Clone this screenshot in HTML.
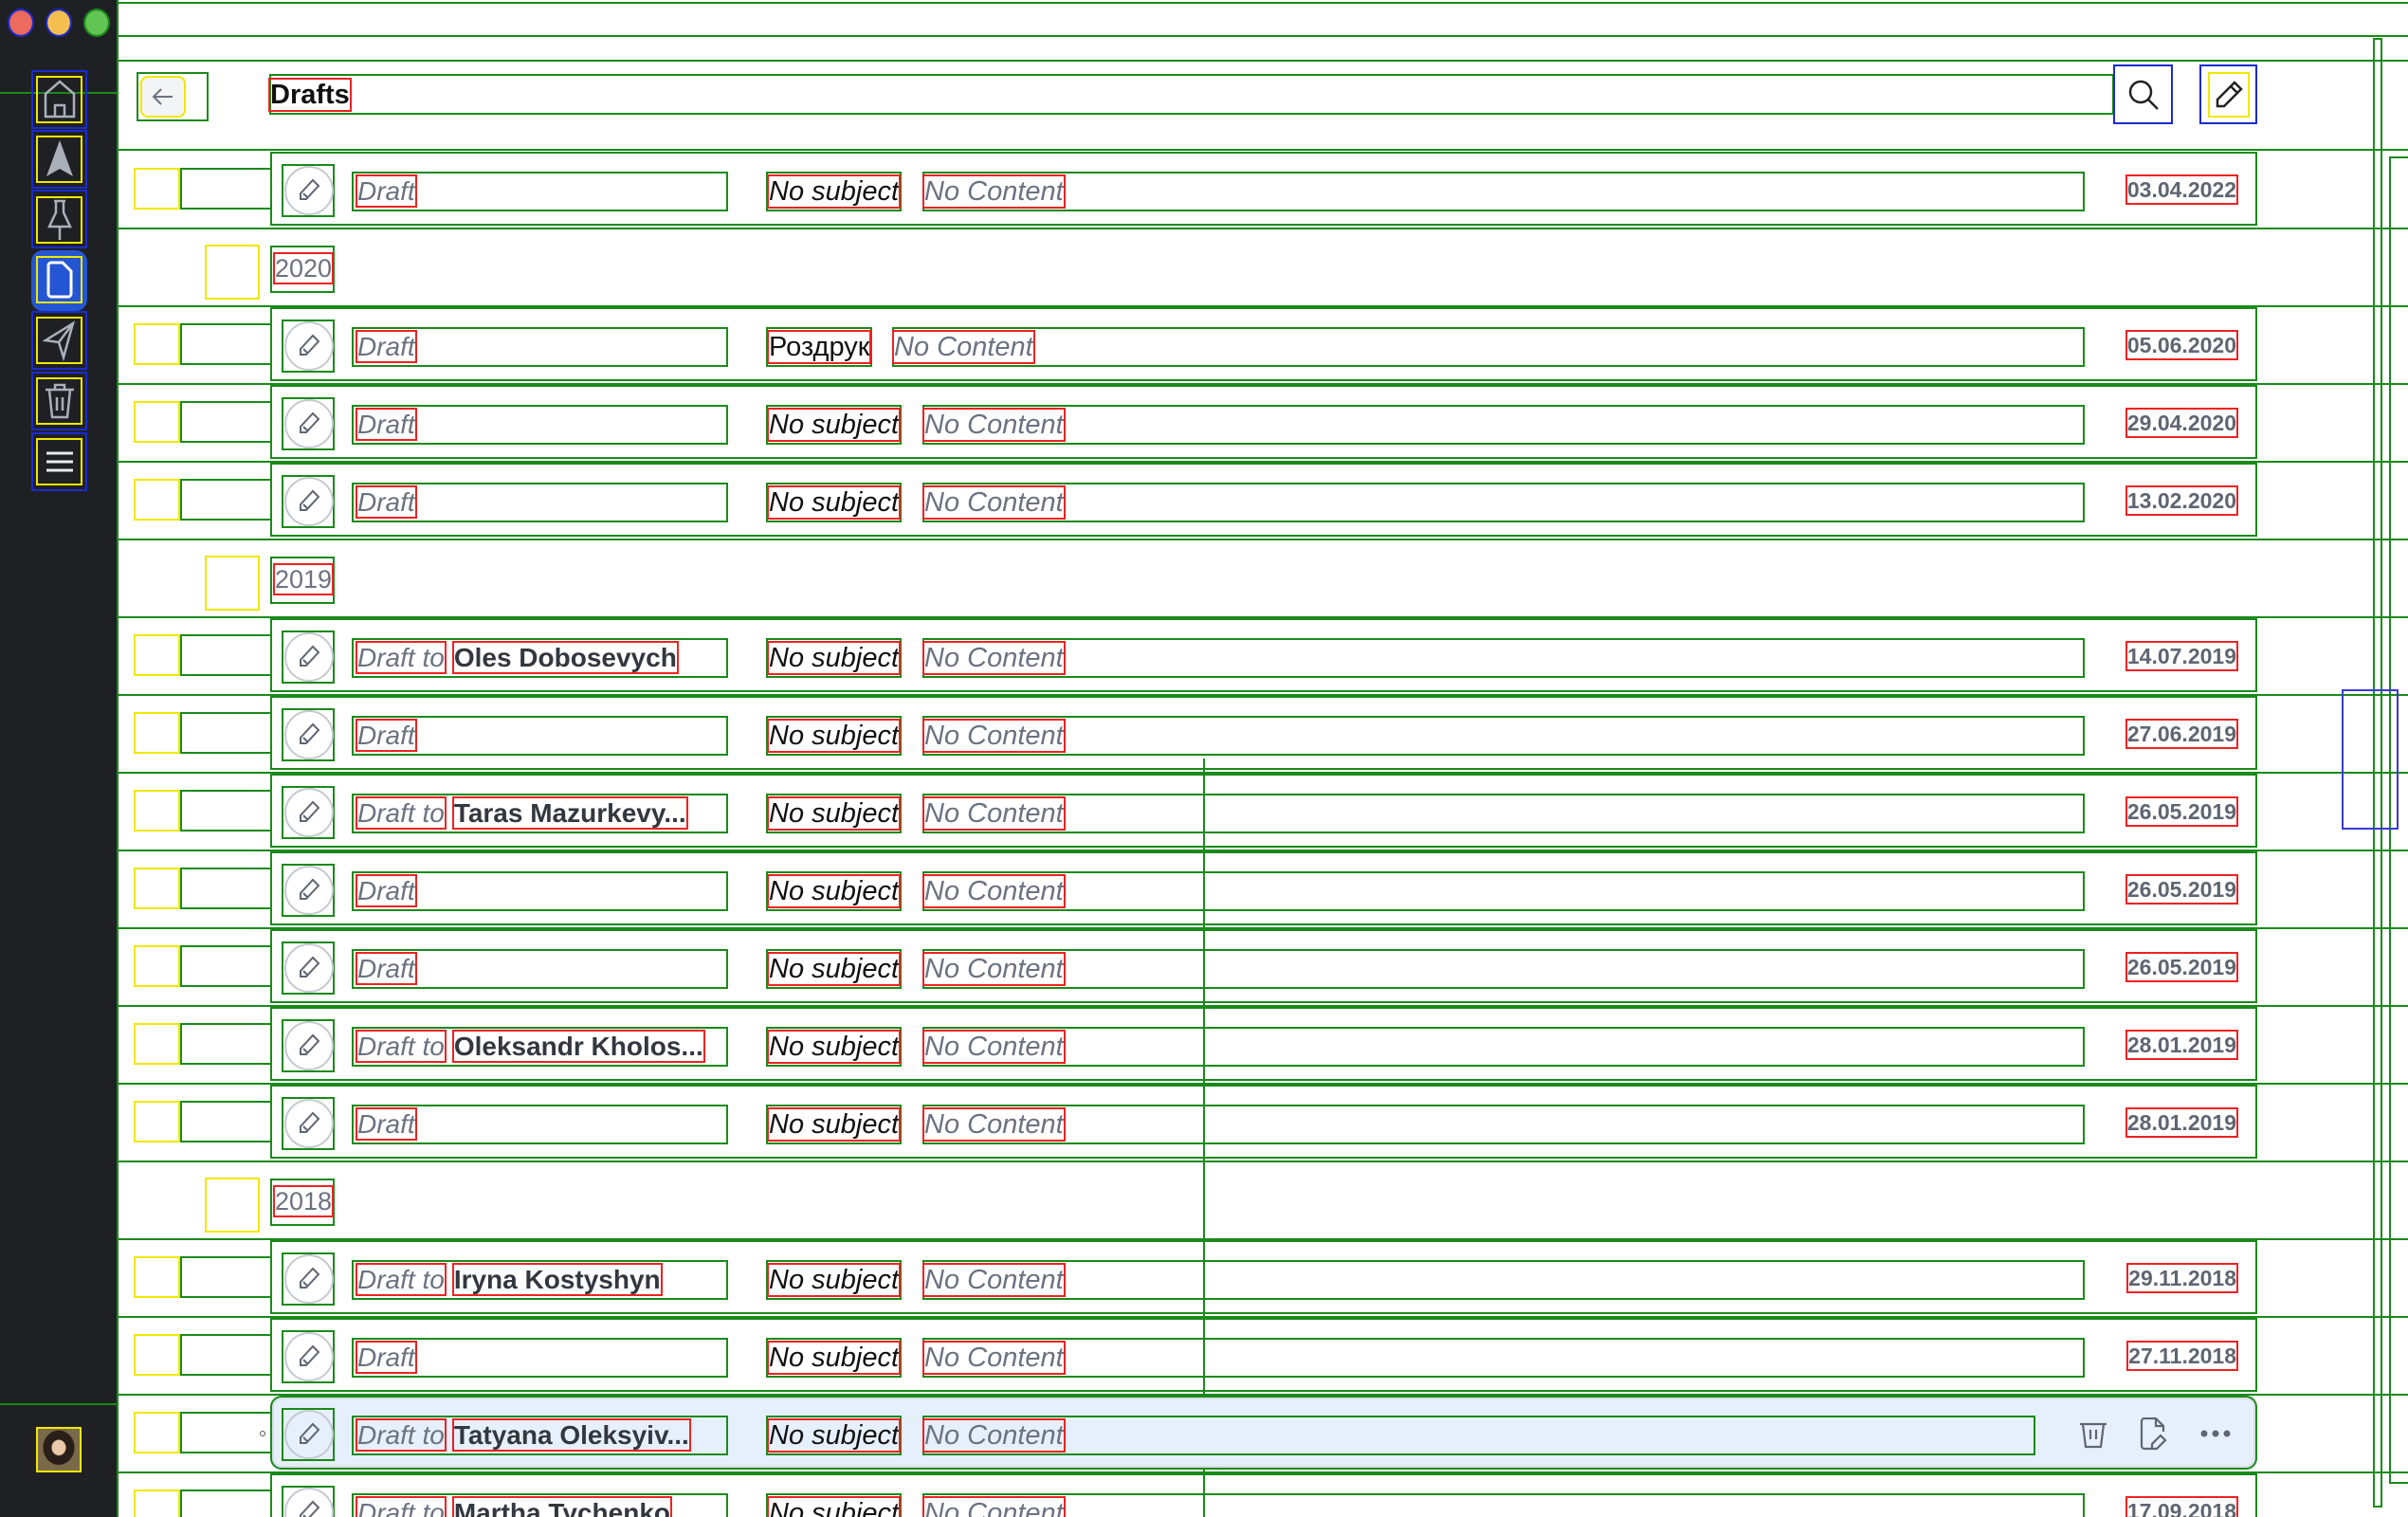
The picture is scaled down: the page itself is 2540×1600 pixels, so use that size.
<!DOCTYPE html>
<html><head><meta charset="utf-8"><style>
*{box-sizing:border-box;margin:0;padding:0}
html,body{width:2540px;height:1600px;overflow:hidden}
body{background:#fff;font-family:"Liberation Sans","Noto Sans CJK SC",sans-serif}
#wrap{position:relative;width:2540px;height:1600px;overflow:hidden}
.a{position:absolute}
.g{position:absolute;border:2px solid #1a8a1a}
.r{outline:2px solid #e22;outline-offset:0}
#side{left:0;top:0;width:125px;height:1600px;background:#1f2024;border-right:2px solid #1a8a1a}
.dot{position:absolute;top:11px;width:24px;height:26px;border-radius:50%}
.ni{position:absolute;left:38px;width:49px;height:50px;border:2px solid #f0e800;display:flex;align-items:center;justify-content:center}
.nb{position:absolute;left:33px;width:59px;height:62px;border:2px solid #1b2bd0}
.row{position:absolute;left:285px;width:2096px;height:78px;border:2px solid #1a8a1a}
.av{position:absolute;left:10px;top:11px;width:56px;height:56px;border:2px solid #1a8a1a}
.av div{position:absolute;left:1px;top:0px;width:52px;height:52px;border-radius:50%;border:2px solid #c5c9d0;display:flex;align-items:center;justify-content:center}
.nm{position:absolute;left:84px;top:19px;width:397px;height:42px;border:2px solid #1a8a1a;font-size:28px;line-height:38px;white-space:nowrap}
.dr{color:#6b7280;font-style:italic;margin-left:4px;outline:2px solid #e22}
.who{color:#33373f;font-weight:bold;margin-left:10px;outline:2px solid #e22}
.sb{position:absolute;left:521px;top:19px;height:42px;border:2px solid #1a8a1a;font-size:29px;line-height:38px;font-style:italic;color:#111;padding:0 1px}
.ct{position:absolute;left:686px;top:19px;width:1226px;height:42px;border:2px solid #1a8a1a;font-size:29px;line-height:38px;font-style:italic;color:#6b7280}
.dt{position:absolute;right:20px;top:24px;font-size:23px;font-weight:bold;color:#5f6672;outline:2px solid #e22;line-height:28px}
.lc{position:absolute;left:141px;width:49px;height:44px;border:2px solid #f0e800}
.lc2{position:absolute;left:190px;width:95px;height:44px;border:2px solid #1a8a1a;border-right:none}
.yr{position:absolute;left:285px;height:50px;width:68px;border:2px solid #1a8a1a;font-size:27px;color:#6b7280;line-height:44px;padding-left:3px}
.yb{position:absolute;left:216px;width:58px;height:58px;border:2px solid #f0e800}
.hl{position:absolute;left:0;width:2540px;height:0;border-top:2px solid #1a8a1a}
</style></head><body><div id="wrap">
<div class="hl" style="top:2px"></div><div class="hl" style="top:37px"></div><div class="hl" style="top:63px"></div>
<div class="hl" style="top:157px"></div><div class="hl" style="top:240px"></div><div class="hl" style="top:322px"></div>
<div class="hl" style="top:404px"></div><div class="hl" style="top:486px"></div><div class="hl" style="top:568px"></div><div class="hl" style="top:650px"></div>
<div class="hl" style="top:732px"></div><div class="hl" style="top:814px"></div><div class="hl" style="top:896px"></div><div class="hl" style="top:978px"></div>
<div class="hl" style="top:1060px"></div><div class="hl" style="top:1142px"></div><div class="hl" style="top:1224px"></div><div class="hl" style="top:1306px"></div>
<div class="hl" style="top:1388px"></div><div class="hl" style="top:1470px"></div><div class="hl" style="top:1552px"></div>
<div class="a" style="left:1269px;top:800px;width:2px;height:800px;background:#1a8a1a"></div>
<div class="a" style="left:2503px;top:40px;width:10px;height:1550px;border:2px solid #1a8a1a"></div>
<div class="a" style="left:2520px;top:165px;width:20px;height:1400px;border:2px solid #1a8a1a;border-right:none"></div>
<div class="a" style="left:2470px;top:727px;width:60px;height:148px;border:2px solid #3a3ad8"></div>

<div id="side" class="a">
<div class="dot" style="left:10px;background:#ec6a5e;outline:2px solid #1b2bd0"></div>
<div class="dot" style="left:50px;background:#f4bf4f;outline:2px solid #1b2bd0"></div>
<div class="dot" style="left:90px;background:#61c554;outline:2px solid #1a8a1a"></div>
<div class="hl" style="top:97px;width:125px"></div>
<div class="nb" style="top:74px"></div><div class="ni" style="top:80px"><svg width="36" height="44" viewBox="0 0 36 44" fill="none" stroke="#aab0ba" stroke-width="2.5"><path d="M3 16 18 3 33 16V40H3Z"/><path d="M13 40V28h10v12"/></svg></div>
<div class="nb" style="top:137px"></div><div class="ni" style="top:143px"><svg width="32" height="44" viewBox="0 0 32 44"><path d="M16 2 30 40 16 32 2 40Z" fill="#aab0ba"/></svg></div>
<div class="nb" style="top:200px"></div><div class="ni" style="top:207px"><svg width="30" height="46" viewBox="0 0 30 46" fill="none" stroke="#aab0ba" stroke-width="2.5"><path d="M9 3h12M11 3v12L4 30h22L19 15V3M15 30v14"/></svg></div>
<div class="a" style="left:33px;top:264px;width:59px;height:64px;border-radius:12px;background:#2456d3"></div>
<div class="ni" style="top:270px"><svg width="30" height="42" viewBox="0 0 30 42" fill="none" stroke="#fff" stroke-width="3"><path d="M6 3h12l9 9v24a3 3 0 0 1-3 3H6a3 3 0 0 1-3-3V6a3 3 0 0 1 3-3Z"/></svg></div>
<div class="nb" style="top:328px"></div><div class="ni" style="top:334px"><svg width="36" height="44" viewBox="0 0 36 44" fill="none" stroke="#aab0ba" stroke-width="2.5"><path d="M32 4 3 22l14 2 5 16Z M17 24 32 4"/></svg></div>
<div class="nb" style="top:392px"></div><div class="ni" style="top:398px"><svg width="34" height="40" viewBox="0 0 34 40" fill="none" stroke="#aab0ba" stroke-width="2.5"><path d="M2 8h30M12 8V3h10v5M6 8l3 29h16l3-29M14 16v14M20 16v14"/></svg></div>
<div class="nb" style="top:456px"></div><div class="ni" style="top:462px"><svg width="32" height="24" viewBox="0 0 32 24" stroke="#e8eaee" stroke-width="3"><path d="M2 3h28M2 12h28M2 21h28"/></svg></div>
<div class="hl" style="top:1480px;width:125px"></div>
<div class="a" style="left:38px;top:1505px;width:48px;height:48px;border:2px solid #f0e800;background:radial-gradient(ellipse at 50% 45%,#e9c9a8 0 7px,#2a1e18 8px 16px,#7a6a4a 17px)"></div>
</div>

<div class="g" style="left:144px;top:76px;width:76px;height:52px"></div>
<div class="a" style="left:148px;top:80px;width:48px;height:44px;border:2px solid #f0e800;background:#f3f4f6;border-radius:8px;display:flex;align-items:center;justify-content:center"><svg width="24" height="20" viewBox="0 0 24 20" fill="none" stroke="#6b7280" stroke-width="2"><path d="M22 10H3M10 2 2 10l8 8"/></svg></div>
<div class="g" style="left:284px;top:78px;width:1946px;height:43px"></div>
<div class="a r" style="left:285px;top:84px;font-size:29px;font-weight:bold;color:#111;line-height:32px">Drafts</div>
<div class="a" style="left:2229px;top:68px;width:63px;height:63px;border:2px solid #1b2bd0;display:flex;align-items:center;justify-content:center"><svg width="34" height="34" viewBox="0 0 34 34" fill="none" stroke="#222" stroke-width="2.5"><circle cx="14" cy="14" r="11"/><path d="M22 22l10 10"/></svg></div>
<div class="a" style="left:2320px;top:68px;width:61px;height:63px;border:2px solid #1b2bd0;display:flex;align-items:center;justify-content:center"><div style="width:44px;height:48px;border:2px solid #f0e800;display:flex;align-items:center;justify-content:center"><svg width="32" height="32" viewBox="0 0 32 32" fill="none" stroke="#222" stroke-width="2.5"><path d="M22 3l7 7L11 28H4v-7Z M18 7l7 7"/></svg></div></div>

<div class="lc" style="top:177px"></div><div class="lc2" style="top:177px"></div>
<div class="row" style="top:160px"><div class="av"><div><svg width="24" height="26" viewBox="0 0 24 26" fill="none" stroke="#5f6672" stroke-width="2"><path d="M16 2l6 6L9 22H3v-6Z M6 16l4 4"/></svg></div></div><div class="nm"><span class="dr">Draft</span></div><div class="sb"><span class="r">No subject</span></div><div class="ct"><span class="r">No Content</span></div><div class="dt">03.04.2022</div></div>

<div class="yb" style="top:258px"></div><div class="yr" style="top:259px"><span class="r">2020</span></div>

<div class="lc" style="top:341px"></div><div class="lc2" style="top:341px"></div>
<div class="row" style="top:324px"><div class="av"><div><svg width="24" height="26" viewBox="0 0 24 26" fill="none" stroke="#5f6672" stroke-width="2"><path d="M16 2l6 6L9 22H3v-6Z M6 16l4 4"/></svg></div></div><div class="nm"><span class="dr">Draft</span></div><div class="sb" style="font-style:normal"><span class="r">Роздрук</span></div><div class="ct" style="left:654px;width:1258px"><span class="r">No Content</span></div><div class="dt">05.06.2020</div></div>

<div class="lc" style="top:423px"></div><div class="lc2" style="top:423px"></div>
<div class="row" style="top:406px"><div class="av"><div><svg width="24" height="26" viewBox="0 0 24 26" fill="none" stroke="#5f6672" stroke-width="2"><path d="M16 2l6 6L9 22H3v-6Z M6 16l4 4"/></svg></div></div><div class="nm"><span class="dr">Draft</span></div><div class="sb"><span class="r">No subject</span></div><div class="ct"><span class="r">No Content</span></div><div class="dt">29.04.2020</div></div>

<div class="lc" style="top:505px"></div><div class="lc2" style="top:505px"></div>
<div class="row" style="top:488px"><div class="av"><div><svg width="24" height="26" viewBox="0 0 24 26" fill="none" stroke="#5f6672" stroke-width="2"><path d="M16 2l6 6L9 22H3v-6Z M6 16l4 4"/></svg></div></div><div class="nm"><span class="dr">Draft</span></div><div class="sb"><span class="r">No subject</span></div><div class="ct"><span class="r">No Content</span></div><div class="dt">13.02.2020</div></div>

<div class="yb" style="top:586px"></div><div class="yr" style="top:587px"><span class="r">2019</span></div>

<div class="lc" style="top:669px"></div><div class="lc2" style="top:669px"></div>
<div class="row" style="top:652px"><div class="av"><div><svg width="24" height="26" viewBox="0 0 24 26" fill="none" stroke="#5f6672" stroke-width="2"><path d="M16 2l6 6L9 22H3v-6Z M6 16l4 4"/></svg></div></div><div class="nm"><span class="dr">Draft to</span><span class="who">Oles Dobosevych</span></div><div class="sb"><span class="r">No subject</span></div><div class="ct"><span class="r">No Content</span></div><div class="dt">14.07.2019</div></div>

<div class="lc" style="top:751px"></div><div class="lc2" style="top:751px"></div>
<div class="row" style="top:734px"><div class="av"><div><svg width="24" height="26" viewBox="0 0 24 26" fill="none" stroke="#5f6672" stroke-width="2"><path d="M16 2l6 6L9 22H3v-6Z M6 16l4 4"/></svg></div></div><div class="nm"><span class="dr">Draft</span></div><div class="sb"><span class="r">No subject</span></div><div class="ct"><span class="r">No Content</span></div><div class="dt">27.06.2019</div></div>

<div class="lc" style="top:833px"></div><div class="lc2" style="top:833px"></div>
<div class="row" style="top:816px"><div class="av"><div><svg width="24" height="26" viewBox="0 0 24 26" fill="none" stroke="#5f6672" stroke-width="2"><path d="M16 2l6 6L9 22H3v-6Z M6 16l4 4"/></svg></div></div><div class="nm"><span class="dr">Draft to</span><span class="who">Taras Mazurkevy...</span></div><div class="sb"><span class="r">No subject</span></div><div class="ct"><span class="r">No Content</span></div><div class="dt">26.05.2019</div></div>

<div class="lc" style="top:915px"></div><div class="lc2" style="top:915px"></div>
<div class="row" style="top:898px"><div class="av"><div><svg width="24" height="26" viewBox="0 0 24 26" fill="none" stroke="#5f6672" stroke-width="2"><path d="M16 2l6 6L9 22H3v-6Z M6 16l4 4"/></svg></div></div><div class="nm"><span class="dr">Draft</span></div><div class="sb"><span class="r">No subject</span></div><div class="ct"><span class="r">No Content</span></div><div class="dt">26.05.2019</div></div>

<div class="lc" style="top:997px"></div><div class="lc2" style="top:997px"></div>
<div class="row" style="top:980px"><div class="av"><div><svg width="24" height="26" viewBox="0 0 24 26" fill="none" stroke="#5f6672" stroke-width="2"><path d="M16 2l6 6L9 22H3v-6Z M6 16l4 4"/></svg></div></div><div class="nm"><span class="dr">Draft</span></div><div class="sb"><span class="r">No subject</span></div><div class="ct"><span class="r">No Content</span></div><div class="dt">26.05.2019</div></div>

<div class="lc" style="top:1079px"></div><div class="lc2" style="top:1079px"></div>
<div class="row" style="top:1062px"><div class="av"><div><svg width="24" height="26" viewBox="0 0 24 26" fill="none" stroke="#5f6672" stroke-width="2"><path d="M16 2l6 6L9 22H3v-6Z M6 16l4 4"/></svg></div></div><div class="nm"><span class="dr">Draft to</span><span class="who">Oleksandr Kholos...</span></div><div class="sb"><span class="r">No subject</span></div><div class="ct"><span class="r">No Content</span></div><div class="dt">28.01.2019</div></div>

<div class="lc" style="top:1161px"></div><div class="lc2" style="top:1161px"></div>
<div class="row" style="top:1144px"><div class="av"><div><svg width="24" height="26" viewBox="0 0 24 26" fill="none" stroke="#5f6672" stroke-width="2"><path d="M16 2l6 6L9 22H3v-6Z M6 16l4 4"/></svg></div></div><div class="nm"><span class="dr">Draft</span></div><div class="sb"><span class="r">No subject</span></div><div class="ct"><span class="r">No Content</span></div><div class="dt">28.01.2019</div></div>

<div class="yb" style="top:1242px"></div><div class="yr" style="top:1243px"><span class="r">2018</span></div>

<div class="lc" style="top:1325px"></div><div class="lc2" style="top:1325px"></div>
<div class="row" style="top:1308px"><div class="av"><div><svg width="24" height="26" viewBox="0 0 24 26" fill="none" stroke="#5f6672" stroke-width="2"><path d="M16 2l6 6L9 22H3v-6Z M6 16l4 4"/></svg></div></div><div class="nm"><span class="dr">Draft to</span><span class="who">Iryna Kostyshyn</span></div><div class="sb"><span class="r">No subject</span></div><div class="ct"><span class="r">No Content</span></div><div class="dt">29.11.2018</div></div>

<div class="lc" style="top:1407px"></div><div class="lc2" style="top:1407px"></div>
<div class="row" style="top:1390px"><div class="av"><div><svg width="24" height="26" viewBox="0 0 24 26" fill="none" stroke="#5f6672" stroke-width="2"><path d="M16 2l6 6L9 22H3v-6Z M6 16l4 4"/></svg></div></div><div class="nm"><span class="dr">Draft</span></div><div class="sb"><span class="r">No subject</span></div><div class="ct"><span class="r">No Content</span></div><div class="dt">27.11.2018</div></div>

<div class="lc" style="top:1489px"></div><div class="lc2" style="top:1489px"></div>
<div class="a" style="left:274px;top:1509px;width:6px;height:6px;border:1px solid #555;border-radius:50%"></div>
<div class="row" style="top:1472px;background:#e6f0fc;border-radius:12px;box-shadow:inset 0 0 0 2px #d8dee8"><div class="av"><div><svg width="24" height="26" viewBox="0 0 24 26" fill="none" stroke="#5f6672" stroke-width="2"><path d="M16 2l6 6L9 22H3v-6Z M6 16l4 4"/></svg></div></div><div class="nm"><span class="dr">Draft to</span><span class="who">Tatyana Oleksyiv...</span></div><div class="sb"><span class="r">No subject</span></div><div class="ct" style="width:1174px"><span class="r">No Content</span></div>
<svg class="a" style="left:1905px;top:23px" width="32" height="32" viewBox="0 0 32 32" fill="none" stroke="#5f6672" stroke-width="2.2"><path d="M2 5h28M5 5l3 24h16l3-24M13 11v10M19 11v10"/></svg>
<svg class="a" style="left:1970px;top:21px" width="30" height="36" viewBox="0 0 30 36" fill="none" stroke="#5f6672" stroke-width="2.2"><path d="M12 33H5a3 3 0 0 1-3-3V4a3 3 0 0 1 3-3h12l8 8v6M17 1v8h8M22 19l5 5-9 9h-5v-5Z"/></svg>
<svg class="a" style="left:2034px;top:33px" width="32" height="10" viewBox="0 0 32 10" fill="#5f6672"><circle cx="4" cy="5" r="3.5"/><circle cx="16" cy="5" r="3.5"/><circle cx="28" cy="5" r="3.5"/></svg>
</div>

<div class="lc" style="top:1571px"></div><div class="lc2" style="top:1571px"></div>
<div class="row" style="top:1554px"><div class="av"><div><svg width="24" height="26" viewBox="0 0 24 26" fill="none" stroke="#5f6672" stroke-width="2"><path d="M16 2l6 6L9 22H3v-6Z M6 16l4 4"/></svg></div></div><div class="nm"><span class="dr">Draft to</span><span class="who">Martha Tychenko</span></div><div class="sb"><span class="r">No subject</span></div><div class="ct"><span class="r">No Content</span></div><div class="dt">17.09.2018</div></div>
</div></body></html>
